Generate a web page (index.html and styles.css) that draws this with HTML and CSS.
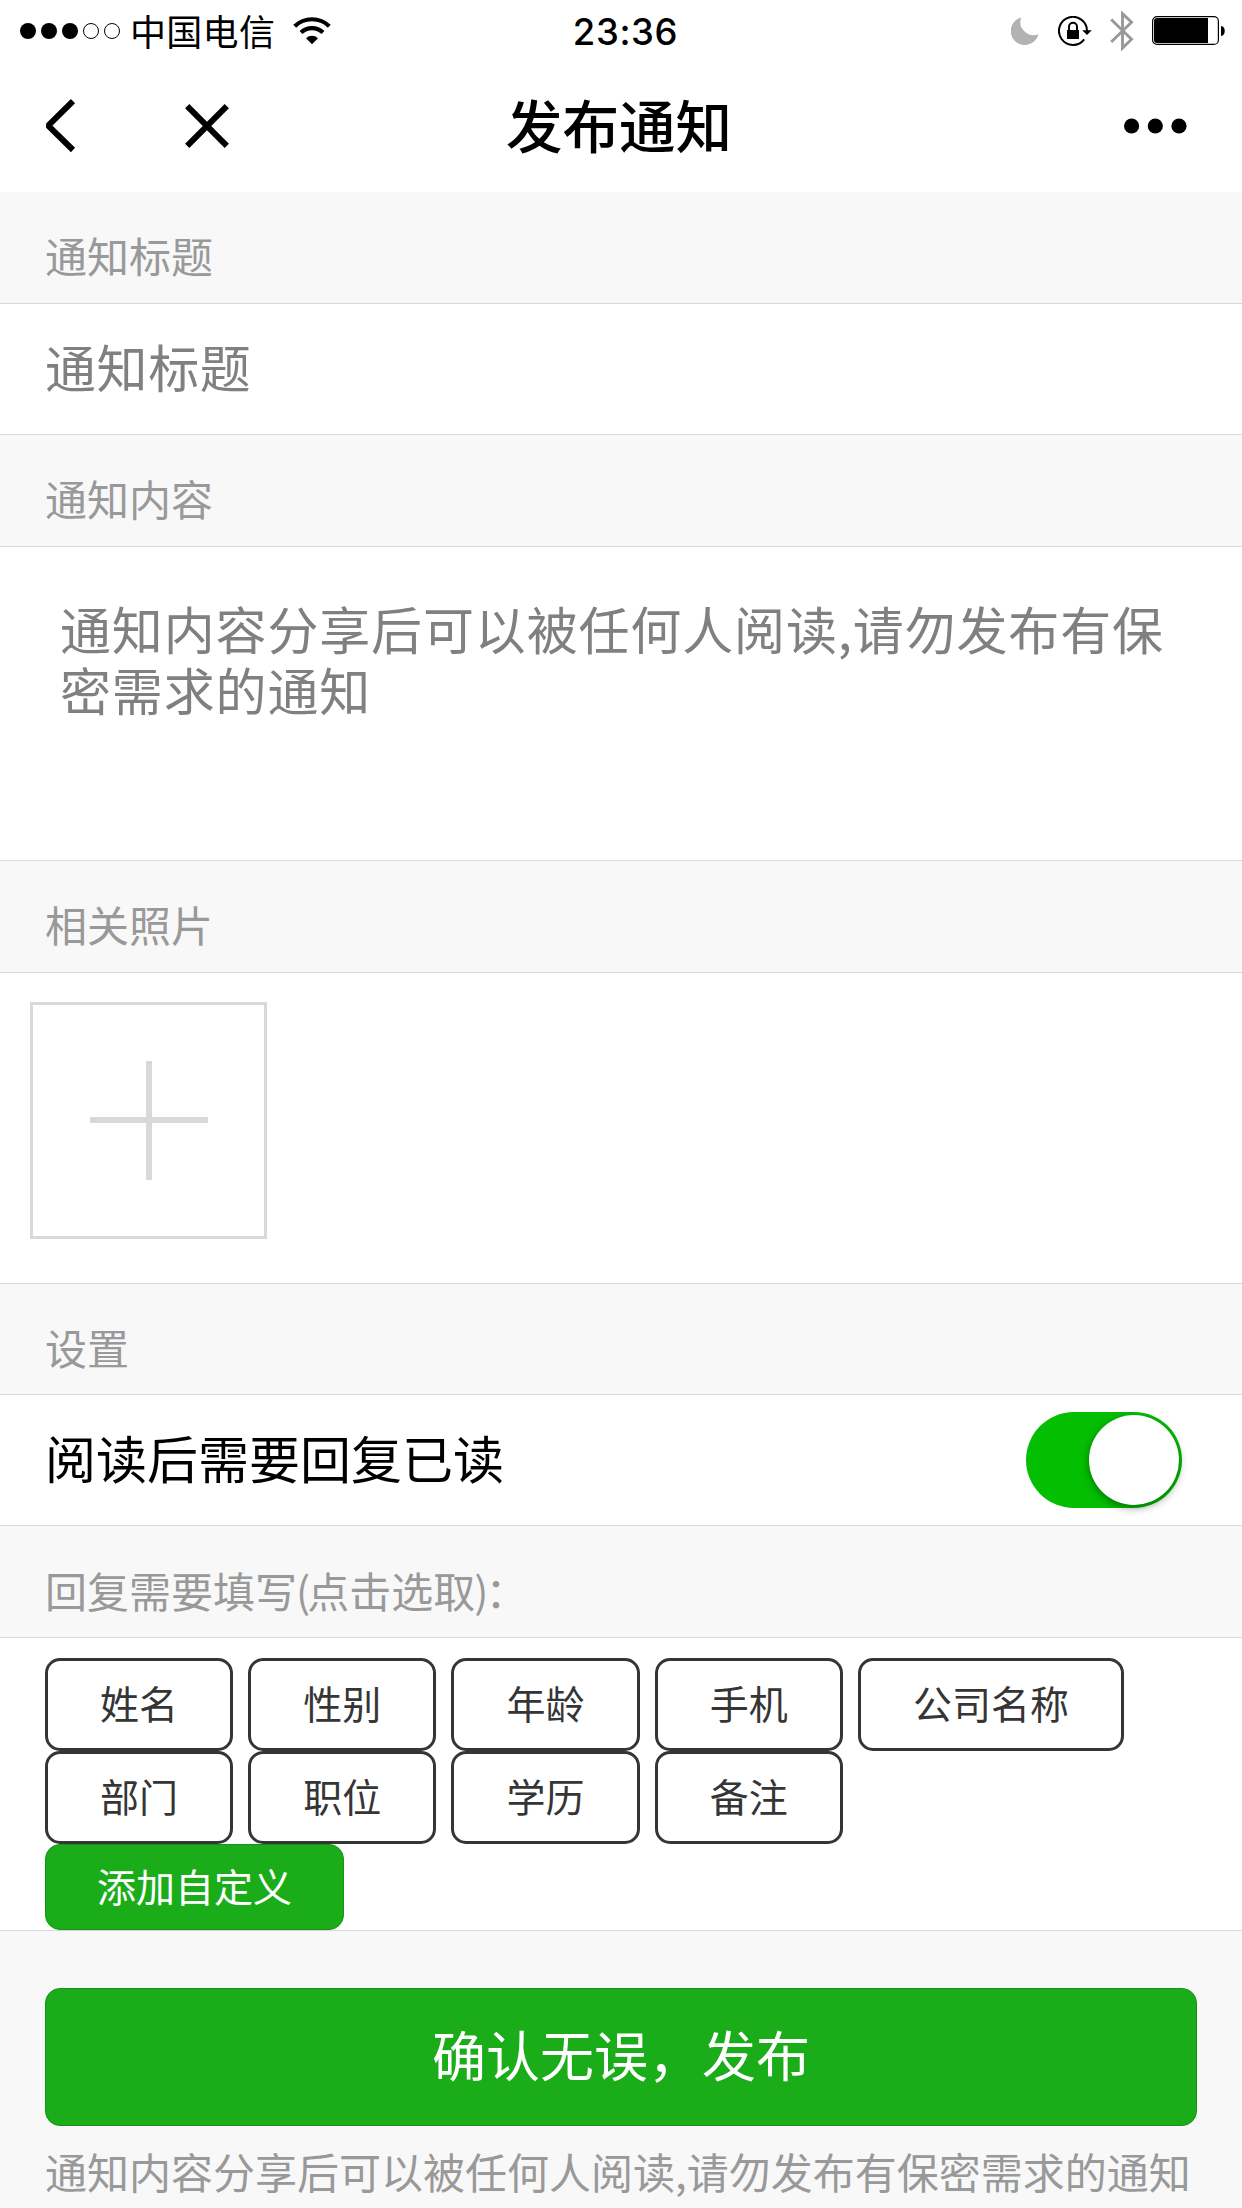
FILE: index.html
```html
<!DOCTYPE html>
<html lang="zh-CN">
<head>
  <meta charset="UTF-8" />
  <meta name="viewport" content="width=device-width, initial-scale=1.0"/>
  <title>发布通知</title>
  <link rel="stylesheet" href="styles.css">
</head>
<body>
  <div class="status-bar">
    <div class="status-left">
      <svg class="signal" width="100" height="16" viewBox="0 0 100 16">
        <circle cx="8" cy="8" r="8"/>
        <circle cx="29" cy="8" r="8"/>
        <circle cx="50" cy="8" r="8"/>
        <circle class="empty" cx="71" cy="8" r="7.5"/>
        <circle class="empty" cx="92" cy="8" r="7.5"/>
      </svg>
      <span class="carrier">中国电信</span>
      <svg class="wifi" width="38" height="28" viewBox="0 0 38 28">
        <path d="M1.7 9.2a25 25 0 0 1 34.6 0" fill="none" stroke="#000" stroke-width="4.2"/>
        <path d="M8 15.6a16 16 0 0 1 22 0" fill="none" stroke="#000" stroke-width="4.2"/>
        <path d="M19 27.2l-6-6a8.6 8.6 0 0 1 12 0z"/>
      </svg>
    </div>
    <div class="time">23:36</div>
    <div class="status-right">
      <svg width="28" height="28" viewBox="0 0 28 28">
        <path d="M10.2 0.5A14 14 0 1 0 27.3 17.3A13.2 13.2 0 0 1 10.2 0.5z" fill="#b2b2b2"/>
      </svg>
      <svg class="lock" width="34" height="30" viewBox="0 0 34 30">
        <path d="M26.2 23.3A14 14 0 1 1 29 15" fill="none" stroke="#000" stroke-width="2"/>
        <path d="M24.2 14.2h9.6L29 19z"/>
        <rect x="9" y="14" width="12" height="9"/>
        <path d="M11 14.5v-3.7a4 4 0 0 1 8 0v3.7" fill="none" stroke="#000" stroke-width="2"/>
      </svg>
      <svg class="bluetooth" width="24" height="42" viewBox="0 0 24 42">
        <path d="M1.2 9.5L21.5 29.3L12.5 38V3.6L21.5 12.2L1.2 32" fill="none" stroke="#999" stroke-width="2.9"/>
      </svg>
      <svg class="battery" width="74" height="30" viewBox="0 0 74 30">
        <rect x="0.6" y="0.6" width="65.8" height="27.8" rx="4.5" fill="none" stroke="#000" stroke-width="1.2"/>
        <path d="M5 2h51v25H5a3 3 0 0 1-3-3V5a3 3 0 0 1 3-3z"/>
        <path d="M69 10c5 0 5 10 0 10z"/>
      </svg>
    </div>
  </div>

  <div class="nav-bar">
    <svg class="nav-back" width="32" height="54" viewBox="0 0 32 54">
      <path d="M29 2.2L4.2 26.7L29 51" fill="none" stroke="#000" stroke-width="6" stroke-linejoin="bevel"/>
    </svg>
    <svg class="nav-close" width="44" height="44" viewBox="0 0 44 44">
      <path d="M2.2 2.2L41.8 41.8M41.8 2.2L2.2 41.8" stroke="#000" stroke-width="6"/>
    </svg>
    <h1>发布通知</h1>
    <svg class="nav-more" width="63" height="16" viewBox="0 0 63 16">
      <circle cx="7.6" cy="8" r="7.6"/>
      <circle cx="31.3" cy="8" r="7.6"/>
      <circle cx="55" cy="8" r="7.6"/>
    </svg>
  </div>

  <div class="cells-title">通知标题</div>
  <div class="cells">
    <input class="title-input" type="text" placeholder="通知标题" />
  </div>

  <div class="cells-title">通知内容</div>
  <div class="cells content-cells">
    <textarea placeholder="通知内容分享后可以被任何人阅读,请勿发布有保密需求的通知"></textarea>
  </div>

  <div class="cells-title">相关照片</div>
  <div class="cells photo-cells">
    <div class="uploader"></div>
  </div>

  <div class="cells-title settings-title">设置</div>
  <div class="cells switch-cells">
    <span>阅读后需要回复已读</span>
    <div class="switch"></div>
  </div>

  <div class="cells-title reply-title">回复需要填写<span class="paren">(</span>点击选取<span class="paren">)</span>：</div>
  <div class="cells tag-cells">
    <div class="tags">
      <button class="tag">姓名</button>
      <button class="tag">性别</button>
      <button class="tag">年龄</button>
      <button class="tag">手机</button>
      <button class="tag">公司名称</button>
      <button class="tag">部门</button>
      <button class="tag">职位</button>
      <button class="tag">学历</button>
      <button class="tag">备注</button>
    </div>
    <button class="add-tag">添加自定义</button>
  </div>

  <button class="submit">确认无误，发布</button>
  <p class="tips">通知内容分享后可以被任何人阅读,请勿发布有保密需求的通知</p>
</body>
</html>
```
FILE: styles.css
```css
* {
  box-sizing: border-box;
}

body {
  margin: 0;
  height: 2208px;
  overflow: hidden;
  background-color: #f8f8f8;
  color: #000;
  font-family: "Noto Sans CJK SC", sans-serif;
  font-weight: 400;
}

input, textarea, button {
  font-family: inherit;
  font-weight: inherit;
}

svg {
  display: block;
  flex: none;
}

/* status bar */
.status-bar {
  display: grid;
  grid-template-columns: 1fr auto 1fr;
  align-items: center;
  height: 60px;
  padding: 0 16px 0 20px;
  background: #fff;
}

.status-left, .status-right {
  display: flex;
  align-items: center;
}

.status-right {
  justify-content: flex-end;
}

.signal .empty {
  fill: none;
  stroke: #000;
  stroke-width: 1;
}

.carrier {
  margin-left: 10px;
  font-size: 36px;
  letter-spacing: 0.3px;
  line-height: 56px;
  padding-bottom: 3px;
}

.wifi {
  margin-left: 18px;
}

.time {
  font-family: Inter, sans-serif;
  font-size: 36.5px;
  font-weight: 500;
  letter-spacing: 0.6px;
  line-height: 60px;
  padding: 2px 0 0 5px;
}

.lock {
  margin-left: 19px;
}

.bluetooth {
  margin-left: 18px;
}

.battery {
  margin-left: 18px;
}

/* nav bar */
.nav-bar {
  display: flex;
  align-items: center;
  height: 132px;
  padding: 0 55px 0 44px;
  background: #fff;
}

.nav-close {
  margin-left: 109px;
}

h1 {
  margin: 0 0 0 277px;
  padding-bottom: 6px;
  font-size: 56.5px;
  font-weight: 500;
  line-height: 126px;
}

.nav-more {
  margin-left: auto;
}

/* form */
.cells-title {
  height: 111px;
  padding: 33px 45px 0;
  color: #999;
  font-size: 42px;
  line-height: 60px;
}

.settings-title {
  height: 110px;
}

.reply-title {
  padding-top: 34px;
}

.paren {
  margin-left: -1px;
  letter-spacing: -3px;
}

.cells {
  height: 132px;
  background: #fff;
  border-top: 1px solid #d9d9d9;
  border-bottom: 1px solid #d9d9d9;
}

.title-input {
  display: block;
  width: 100%;
  height: 130px;
  padding: 0 45px 6px;
  border: 0;
  font-size: 51px;
  letter-spacing: 0.6px;
}

::placeholder {
  color: #808080;
  opacity: 1;
}

.content-cells {
  height: 315px;
  padding: 51px 60px 0;
}

textarea {
  display: block;
  width: 100%;
  height: 210px;
  padding: 0;
  border: 0;
  resize: none;
  overflow: hidden;
  font-size: 51px;
  letter-spacing: 0.85px;
  line-height: 61px;
}

.photo-cells {
  height: 312px;
  padding: 29px 30px;
}

.uploader {
  width: 237px;
  height: 237px;
  border: 3px solid #d9d9d9;
  background:
    linear-gradient(#d9d9d9, #d9d9d9) 57px 112px / 118px 6px no-repeat,
    linear-gradient(#d9d9d9, #d9d9d9) 113px 56px / 6px 119px no-repeat;
}

.switch-cells {
  display: flex;
  align-items: center;
  justify-content: space-between;
  padding: 0 60px 0 45px;
  font-size: 51px;
}

.switch-cells span {
  padding-bottom: 6px;
}

.switch {
  width: 156px;
  height: 96px;
  padding: 3px;
  border-radius: 48px;
  background: #04be02;
}

.switch::after {
  content: "";
  display: block;
  width: 90px;
  height: 90px;
  margin-left: auto;
  border-radius: 50%;
  background: #fff;
  box-shadow: 0 3px 9px rgba(0, 0, 0, 0.4);
}

.tag-cells {
  height: 294px;
  padding: 20px 45px 0;
}

.tags {
  display: flex;
  flex-wrap: wrap;
  column-gap: 15px;
}

.tag {
  height: 93px;
  padding: 0 52.1px 5px;
  border: 3px solid #353535;
  border-radius: 15px;
  background: #fff;
  color: #353535;
  font-size: 39px;
}

.add-tag {
  display: block;
  width: 299px;
  height: 86px;
  padding: 0 0 4px;
  border: 1px solid #179217;
  border-radius: 15px;
  background: #1aad19;
  color: #fff;
  font-size: 39px;
}

.submit {
  display: block;
  width: 1152px;
  height: 138px;
  margin: 57px 45px 0;
  padding: 0 0 8px;
  border: 1px solid #179217;
  border-radius: 15px;
  background: #1aad19;
  color: #fff;
  font-size: 54px;
}

.tips {
  margin: 15px 45px 0;
  color: #999;
  font-size: 42px;
  line-height: 60px;
  white-space: nowrap;
}
```
